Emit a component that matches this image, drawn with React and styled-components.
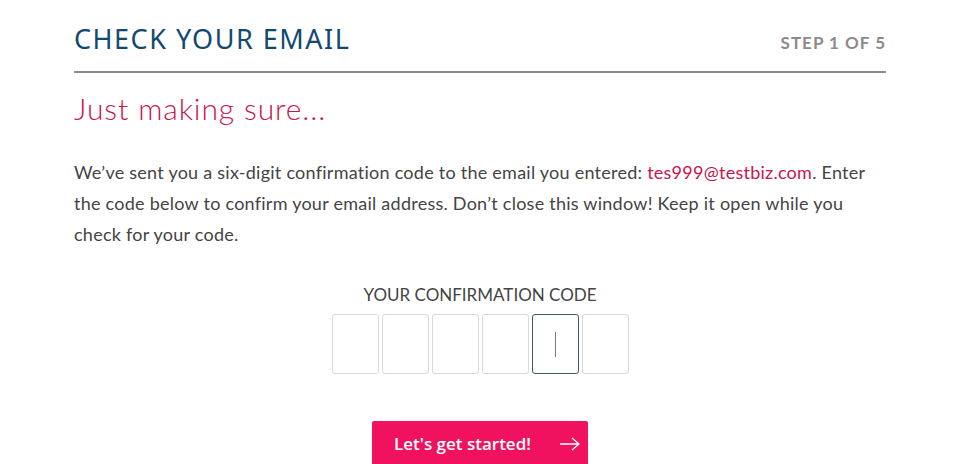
import React from "react";
import styled, { createGlobalStyle } from "styled-components";

const Global = createGlobalStyle`
  html, body { margin: 0; padding: 0; background: #fff; }
  body { font-family: Lato, "Open Sans", sans-serif; }
`;

const Page = styled.div`
  width: 812px;
  margin: 0 auto;
  padding-top: 20px;
`;

const Header = styled.header`
  display: flex;
  justify-content: space-between;
  align-items: baseline;
  border-bottom: 2px solid #8a8a8a;
  padding-bottom: 14px;
`;

const Title = styled.h1`
  margin: 0;
  font-family: "Noto Sans", "DejaVu Sans", sans-serif;
  font-weight: 400;
  font-size: 27px;
  letter-spacing: 1.5px;
  color: #124a6f;
`;

const Step = styled.div`
  font-family: Lato, sans-serif;
  font-weight: 700;
  font-size: 17px;
  letter-spacing: 1px;
  color: #8b8b8b;
`;

const Subtitle = styled.h2`
  margin: 17px 0 0;
  font-family: Lato, sans-serif;
  font-weight: 300;
  font-size: 30px;
  letter-spacing: 0.9px;
  color: #c8144f;
`;

const Body = styled.p`
  margin: 31px 0 0;
  font-family: Lato, sans-serif;
  font-size: 18px;
  line-height: 31px;
  letter-spacing: 0.25px;
  color: #444;
`;

const Email = styled.span`
  color: #c8144f;
`;

const CodeSection = styled.div`
  display: flex;
  flex-direction: column;
  align-items: center;
  margin-top: 34px;
`;

const CodeLabel = styled.div`
  font-family: Lato, sans-serif;
  font-size: 17px;
  color: #444;
  text-transform: uppercase;
`;

const Boxes = styled.div`
  display: flex;
  gap: 3px;
  margin-top: 9px;
`;

const Box = styled.div`
  width: 47px;
  height: 60px;
  box-sizing: border-box;
  border: 1px solid ${(p) => (p.$active ? "#3f5a70" : "#d9d9d9")};
  border-radius: 3px;
  display: flex;
  align-items: center;
  justify-content: center;
`;

const Caret = styled.div`
  width: 1px;
  height: 25px;
  background: #777;
`;

const Button = styled.button`
  margin-top: 47px;
  width: 216px;
  height: 50px;
  border: none;
  border-radius: 2px;
  background: #f0115f;
  color: #fff;
  font-family: "Open Sans", sans-serif;
  font-weight: 600;
  font-size: 17px;
  display: flex;
  align-items: center;
  justify-content: space-between;
  padding: 0 7px 5px 22px;
  box-sizing: border-box;
  align-self: center;
`;

const Arrow = () => (
  <svg width="22" height="14" viewBox="0 0 22 14" fill="none" stroke="#fff" strokeWidth="1.3">
    <path d="M1 7h19M13 1l7 6-7 6" />
  </svg>
);

export default function App() {
  return (
    <>
      <Global />
      <Page>
        <Header>
          <Title>CHECK YOUR EMAIL</Title>
          <Step>STEP 1 OF 5</Step>
        </Header>
        <Subtitle>Just making sure...</Subtitle>
        <Body>
          We’ve sent you a six-digit confirmation code to the email you entered:{" "}
          <Email>tes999@testbiz.com</Email>. Enter the code below to confirm your email
          address. Don’t close this window! Keep it open while you check for your code.
        </Body>
        <CodeSection>
          <CodeLabel>Your confirmation code</CodeLabel>
          <Boxes>
            {[0, 1, 2, 3, 4, 5].map((i) => (
              <Box key={i} $active={i === 4}>
                {i === 4 && <Caret />}
              </Box>
            ))}
          </Boxes>
          <Button>
            Let's get started!
            <Arrow />
          </Button>
        </CodeSection>
      </Page>
    </>
  );
}
